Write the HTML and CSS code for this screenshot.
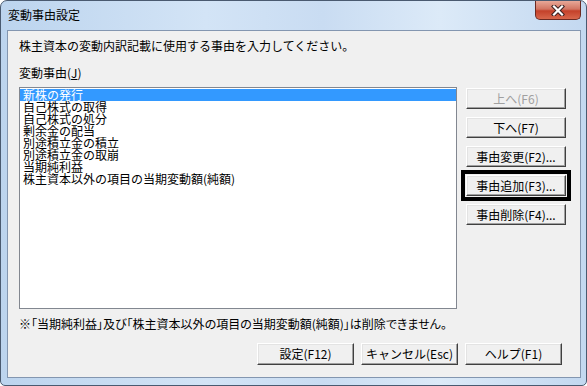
FILE: index.html
```html
<!DOCTYPE html>
<html lang="ja">
<head>
    <meta charset="UTF-8">
    <title>変動事由設定</title>
    <link rel="stylesheet" href="styles.css">
</head>
<body>
    <div class="window">
        <div class="titlebar">
            <span class="title">変動事由設定</span>
            <div class="close-btn">
                <svg width="18" height="11" viewBox="0 0 18 11">
                    <path d="M5 1.5 L13 9.5 M13 1.5 L5 9.5" stroke="#3a2020" stroke-width="4.2" stroke-linecap="square"/>
                    <path d="M5 1.5 L13 9.5 M13 1.5 L5 9.5" stroke="#ffffff" stroke-width="2.2" stroke-linecap="square"/>
                </svg>
            </div>
        </div>

        <div class="client">
            <p class="intro">株主資本の変動内訳記載に使用する事由を入力してください。</p>
            <div class="label">変動事由(<u>J</u>)</div>

            <div class="main">
                <ul class="list">
                    <li class="selected">新株の発行</li>
                    <li>自己株式の取得</li>
                    <li>自己株式の処分</li>
                    <li>剰余金の配当</li>
                    <li>別途積立金の積立</li>
                    <li>別途積立金の取崩</li>
                    <li>当期純利益</li>
                    <li>株主資本以外の項目の当期変動額(純額)</li>
                </ul>
                <div class="side-buttons">
                    <button class="btn" disabled>上へ(F6)</button>
                    <button class="btn">下へ(F7)</button>
                    <button class="btn">事由変更(F2)...</button>
                    <div class="mark">
                        <button class="btn">事由追加(F3)...</button>
                    </div>
                    <button class="btn">事由削除(F4)...</button>
                </div>
            </div>

            <p class="note">※「当期純利益」及び「株主資本以外の項目の当期変動額(純額)」は削除できません。</p>

            <div class="footer-buttons">
                <button class="btn wide">設定(F12)</button>
                <button class="btn wide">キャンセル(Esc)</button>
                <button class="btn wide">ヘルプ(F1)</button>
            </div>
        </div>
    </div>
</body>
</html>
```

FILE: styles.css
```css
body {
    margin: 0;
    background-color: #ffffff;
    font-family: "Noto Sans CJK JP", "Liberation Sans", sans-serif;
    font-size: 12px;
    color: #000;
}
.window {
    width: 587px;
    height: 386px;
    box-sizing: border-box;
    border: 1px solid #4a5a70;
    border-radius: 7px 7px 5px 5px;
    background: linear-gradient(to right, #bcd4ee, #d3e4f6 35%, #c9dcf2 55%, #dceaf8 75%, #c3d8f0);
    display: flex;
    flex-direction: column;
}
.titlebar {
    height: 29px;
    display: flex;
    justify-content: space-between;
    align-items: flex-start;
    padding-left: 7px;
}
.title {
    margin-top: 6px;
    line-height: 16px;
    font-size: 12px;
    color: #000;
}
.close-btn {
    width: 46px;
    height: 19px;
    margin-right: 5px;
    box-sizing: border-box;
    border: 1px solid #6b2a22;
    border-top: none;
    border-radius: 0 0 5px 5px;
    background: linear-gradient(to bottom, #e8a898, #d27562 45%, #c4412a 55%, #d8674c);
    display: flex;
    align-items: center;
    justify-content: center;
}
.client {
    flex: 1;
    margin: 0 5px 7px 6px;
    border: 1px solid #8396b0;
    background-color: #f0f0f0;
    padding: 9px 13px 11px 11px;
    display: flex;
    flex-direction: column;
}
.intro {
    margin: 0;
    line-height: 12px;
}
.label {
    margin-top: 15px;
    line-height: 12px;
}
.main {
    display: flex;
    gap: 9px;
    margin-top: 8px;
}
.list {
    list-style: none;
    margin: 0;
    padding: 1px 0;
    width: 438px;
    height: 222px;
    box-sizing: border-box;
    border: 1px solid #828790;
    background-color: #ffffff;
}
.list li {
    height: 12px;
    line-height: 12px;
    padding-left: 3px;
    white-space: nowrap;
}
.list li.selected {
    background-color: #3399ff;
    color: #ffffff;
}
.side-buttons {
    width: 100px;
    display: flex;
    flex-direction: column;
    gap: 8px;
    padding-top: 1px;
}
.btn {
    height: 21px;
    width: 100%;
    box-sizing: border-box;
    padding: 0;
    font-family: inherit;
    font-size: 12px;
    line-height: 12px;
    color: #000;
    background-color: #f0f0f0;
    border: 1px solid;
    border-color: #ffffff #404040 #404040 #ffffff;
    box-shadow: inset -1px -1px #a0a0a0, inset 1px 1px #e3e3e3;
}
.btn:disabled {
    color: #a0a0a0;
}
.mark {
    margin: -5px;
    padding: 1px;
    border: 4px solid #000;
}
.note {
    margin: 9px 0 0;
    line-height: 12px;
    font-feature-settings: "palt";
}
.footer-buttons {
    display: flex;
    justify-content: flex-end;
    gap: 7px;
    margin-top: 13px;
    margin-right: 5px;
}
.btn.wide {
    width: 97px;
    height: 22px;
}
```
